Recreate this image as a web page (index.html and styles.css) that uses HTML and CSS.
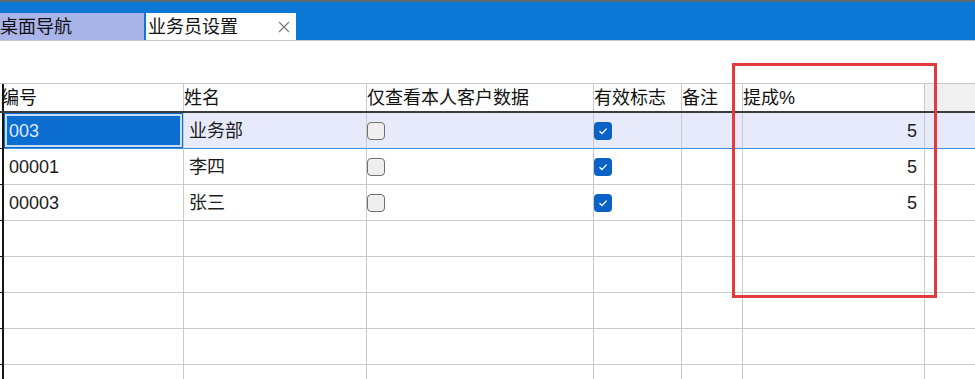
FILE: index.html
```html
<!DOCTYPE html>
<html lang="zh">
<head>
<meta charset="utf-8">
<title>业务员设置</title>
<link rel="stylesheet" href="styles.css">
</head>
<body>
<div class="tabbar">
  <div class="tab nav">桌面导航</div>
  <div class="tab active"><span class="tab-label">业务员设置</span><svg class="close" width="12" height="12" viewBox="0 0 12 12"><path d="M1 1 L11 11 M11 1 L1 11" stroke="#7a7a7a" stroke-width="1.2" fill="none"/></svg></div>
</div>

<div class="grid">
  <div class="row head">
    <div class="ind"></div>
    <div class="cell first">编号</div>
    <div class="cell">姓名</div>
    <div class="cell">仅查看本人客户数据</div>
    <div class="cell">有效标志</div>
    <div class="cell">备注</div>
    <div class="cell">提成%</div>
    <div class="cell filler"></div>
  </div>

  <div class="row body sel">
    <div class="ind"></div>
    <div class="cell focus">003</div>
    <div class="cell">业务部</div>
    <div class="cell"><span class="cb"></span></div>
    <div class="cell"><span class="cb on"><svg width="18" height="18" viewBox="0 0 18 18"><path d="M5.5 9.2 L8 11.6 L12.6 6.6" stroke="#fff" stroke-width="1.4" fill="none"/></svg></span></div>
    <div class="cell"></div>
    <div class="cell num">5</div>
    <div class="cell"></div>
  </div>

  <div class="row body">
    <div class="ind"></div>
    <div class="cell">00001</div>
    <div class="cell">李四</div>
    <div class="cell"><span class="cb"></span></div>
    <div class="cell"><span class="cb on"><svg width="18" height="18" viewBox="0 0 18 18"><path d="M5.5 9.2 L8 11.6 L12.6 6.6" stroke="#fff" stroke-width="1.4" fill="none"/></svg></span></div>
    <div class="cell"></div>
    <div class="cell num">5</div>
    <div class="cell"></div>
  </div>

  <div class="row body">
    <div class="ind"></div>
    <div class="cell">00003</div>
    <div class="cell">张三</div>
    <div class="cell"><span class="cb"></span></div>
    <div class="cell"><span class="cb on"><svg width="18" height="18" viewBox="0 0 18 18"><path d="M5.5 9.2 L8 11.6 L12.6 6.6" stroke="#fff" stroke-width="1.4" fill="none"/></svg></span></div>
    <div class="cell"></div>
    <div class="cell num">5</div>
    <div class="cell"></div>
  </div>

  <div class="row body"><div class="ind"></div><div class="cell"></div><div class="cell"></div><div class="cell"></div><div class="cell"></div><div class="cell"></div><div class="cell"></div><div class="cell"></div></div>
  <div class="row body"><div class="ind"></div><div class="cell"></div><div class="cell"></div><div class="cell"></div><div class="cell"></div><div class="cell"></div><div class="cell"></div><div class="cell"></div></div>
  <div class="row body"><div class="ind"></div><div class="cell"></div><div class="cell"></div><div class="cell"></div><div class="cell"></div><div class="cell"></div><div class="cell"></div><div class="cell"></div></div>
  <div class="row body"><div class="ind"></div><div class="cell"></div><div class="cell"></div><div class="cell"></div><div class="cell"></div><div class="cell"></div><div class="cell"></div><div class="cell"></div></div>
  <div class="row body"><div class="ind"></div><div class="cell"></div><div class="cell"></div><div class="cell"></div><div class="cell"></div><div class="cell"></div><div class="cell"></div><div class="cell"></div></div>
</div>

<div class="highlight"></div>
</body>
</html>
```

FILE: styles.css
```css
* { box-sizing: border-box; }

html, body {
  margin: 0;
  padding: 0;
  background: #ffffff;
  overflow: hidden;
}

body {
  position: relative;
  width: 975px;
  height: 379px;
  font-family: "Liberation Sans", "Noto Sans CJK SC", sans-serif;
  font-size: 18px;
  color: #1c1c1c;
}

/* ---------- tab bar ---------- */
.tabbar {
  height: 41px;
  background: #0a78d4;
  border-top: 2px solid #5d6975;
  border-bottom: 1px solid #c4c4c4;
  display: flex;
  align-items: flex-end;
}

.tab {
  height: 27px;
  display: flex;
  align-items: center;
  line-height: 1;
  color: #111;
}

.tab.nav {
  width: 144px;
  background: #a9b5e8;
  padding-left: 0;
  margin-right: 2px;
}

.tab.active {
  width: 150px;
  background: #ffffff;
  padding-left: 2px;
  justify-content: space-between;
  padding-right: 6px;
}

.close { margin-top: 1px; }

/* ---------- grid ---------- */
.grid {
  margin-top: 42px;
  height: 296px;
  overflow: hidden;
}

.row {
  display: grid;
  grid-template-columns: 4px 180px 183px 227px 88px 61px 182px 1fr;
}

.ind {
  border-right: 2px solid #151515;
}

.cell {
  border-right: 1px solid #cacaca;
  display: flex;
  align-items: center;
  white-space: nowrap;
  overflow: hidden;
  line-height: 1;
}

.row.head {
  height: 30px;
  border-top: 1px solid #c8c8c8;
  border-bottom: 2px solid #3b3b3b;
}

.row.head .cell {
  padding-left: 0;
  color: #111;
}

.row.head .cell.first {
  margin-left: -3px;
  overflow: visible;
}

.row.head .filler {
  background: #f0f0f0;
  border-right: none;
}

.row.body {
  height: 36px;
}

.row.body .cell {
  border-bottom: 1px solid #cacaca;
  padding-left: 5px;
}

.row.body .ind {
  border-bottom: 1px solid #151515;
}

.row.body .cell:last-child {
  border-right: none;
}

.row.sel .cell {
  background: #e7eafb;
  border-bottom-color: #3b8fe0;
}

.row.sel .cell.focus {
  background: #0b6dcf;
  color: #dfeafa;
  box-shadow: inset 0 0 0 1px #0b6dcf, inset 0 0 0 3px #c9def6;
}

.row.body .cell.num {
  justify-content: flex-end;
  padding-right: 7px;
}

/* checkboxes */
.row.body .cb {
  width: 18px;
  height: 18px;
  margin-left: -5px;
  margin-top: 1px;
  border: 1.5px solid #707070;
  border-radius: 4px;
  background: #efefef;
  display: block;
}

.row.body .cb.on {
  border: none;
  background: #0a62c6;
}

.cb svg { display: block; }

/* red annotation box over the 提成% column */
.highlight {
  position: absolute;
  left: 732px;
  top: 63px;
  width: 205px;
  height: 235px;
  border: 3px solid #e23b3b;
  pointer-events: none;
}
```
